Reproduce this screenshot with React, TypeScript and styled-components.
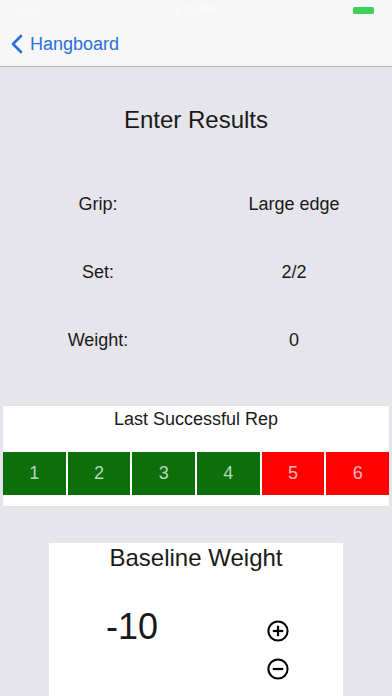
import React from "react";
import styled, { createGlobalStyle } from "styled-components";

const Global = createGlobalStyle`
  html, body { margin: 0; padding: 0; }
  body { font-family: "Liberation Sans", Arial, sans-serif; background: #e6e5eb; }
`;

const Screen = styled.div`
  width: 392px;
  min-height: 696px;
  height: 696px;
  overflow: hidden;
  background: #e6e5eb;
  display: flex;
  flex-direction: column;
  color: #1a1a1a;
`;

const StatusBar = styled.div`
  height: 20px;
  background: #f7f7f7;
  display: flex;
  align-items: center;
  justify-content: space-between;
  padding: 0 18px 0 6px;
  font-size: 12px;
  color: #fbfbfb;
  position: relative;
`;

const StatusTime = styled.span`
  position: absolute;
  left: 50%;
  transform: translateX(-50%);
  font-weight: bold;
`;

const Battery = styled.div`
  width: 21px;
  height: 7px;
  border-radius: 1.5px;
  background: #3fd25a;
`;

const NavBar = styled.div`
  height: 47px;
  box-sizing: border-box;
  background: #f7f7f7;
  border-bottom: 1px solid #b5b5b8;
  display: flex;
  align-items: center;
  padding: 2px 0 0 11px;
  gap: 7px;
  color: #2a6fd8;
  font-size: 18px;
`;

const Title = styled.div`
  margin-top: 39px;
  text-align: center;
  font-size: 24px;
  line-height: 28px;
`;

const InfoList = styled.div`
  margin-top: 36px;
  display: flex;
  flex-direction: column;
`;

const InfoRow = styled.div`
  display: grid;
  grid-template-columns: 196px 196px;
  height: 68px;
  align-items: center;
  font-size: 18px;
  text-align: center;
`;

const RepPanel = styled.div`
  margin: 32px 3px 0;
  background: #fff;
  height: 100px;
  box-sizing: border-box;
  padding-top: 2px;
  box-shadow: 0 0 1px rgba(0, 0, 0, 0.12);
`;

const PanelLabel = styled.div`
  text-align: center;
  font-size: 18px;
  line-height: 22px;
`;

const RepRow = styled.div`
  margin-top: 22px;
  display: grid;
  grid-template-columns: repeat(6, 1fr);
  gap: 2px;
`;

const RepButton = styled.div<{ $ok: boolean }>`
  height: 43px;
  background: ${(p) => (p.$ok ? "#0c6f0c" : "#ff0101")};
  color: rgba(255, 255, 255, 0.72);
  font-size: 18px;
  display: flex;
  align-items: center;
  justify-content: center;
`;

const BaselinePanel = styled.div`
  margin: 37px auto 0;
  width: 294px;
  flex: 1;
  background: #fff;
  padding-top: 1px;
`;

const BaselineTitle = styled.div`
  text-align: center;
  font-size: 24px;
  line-height: 28px;
`;

const BaselineBody = styled.div`
  margin-top: 34px;
  display: flex;
  padding-left: 57px;
`;

const Value = styled.div`
  width: 161px;
  font-size: 36px;
  line-height: 42px;
`;

const Stepper = styled.div`
  margin-top: 14px;
  display: flex;
  flex-direction: column;
  gap: 16px;
`;

const CircleIcon = ({ plus }: { plus?: boolean }) => (
  <svg width="22" height="22" viewBox="0 0 22 22">
    <circle cx="11" cy="11" r="9.6" fill="none" stroke="#000" strokeWidth="2" />
    <line x1="5.8" y1="11" x2="16.2" y2="11" stroke="#000" strokeWidth="2.2" />
    {plus && <line x1="11" y1="5.8" x2="11" y2="16.2" stroke="#000" strokeWidth="2.2" />}
  </svg>
);

const reps = [1, 2, 3, 4, 5, 6];

export default function App() {
  return (
    <>
      <Global />
      <Screen>
        <StatusBar>
          <span>Carrier</span>
          <StatusTime>1:20 PM</StatusTime>
          <Battery />
        </StatusBar>
        <NavBar>
          <svg width="12" height="20" viewBox="0 0 12 20">
            <path d="M10 2 L2 10 L10 18" fill="none" stroke="#2a6fd8" strokeWidth="2.6" strokeLinecap="round" strokeLinejoin="round" />
          </svg>
          <span>Hangboard</span>
        </NavBar>
        <Title>Enter Results</Title>
        <InfoList>
          <InfoRow><span>Grip:</span><span>Large edge</span></InfoRow>
          <InfoRow><span>Set:</span><span>2/2</span></InfoRow>
          <InfoRow><span>Weight:</span><span>0</span></InfoRow>
        </InfoList>
        <RepPanel>
          <PanelLabel>Last Successful Rep</PanelLabel>
          <RepRow>
            {reps.map((r) => (
              <RepButton key={r} $ok={r <= 4}>{r}</RepButton>
            ))}
          </RepRow>
        </RepPanel>
        <BaselinePanel>
          <BaselineTitle>Baseline Weight</BaselineTitle>
          <BaselineBody>
            <Value>-10</Value>
            <Stepper>
              <CircleIcon plus />
              <CircleIcon />
            </Stepper>
          </BaselineBody>
        </BaselinePanel>
      </Screen>
    </>
  );
}
